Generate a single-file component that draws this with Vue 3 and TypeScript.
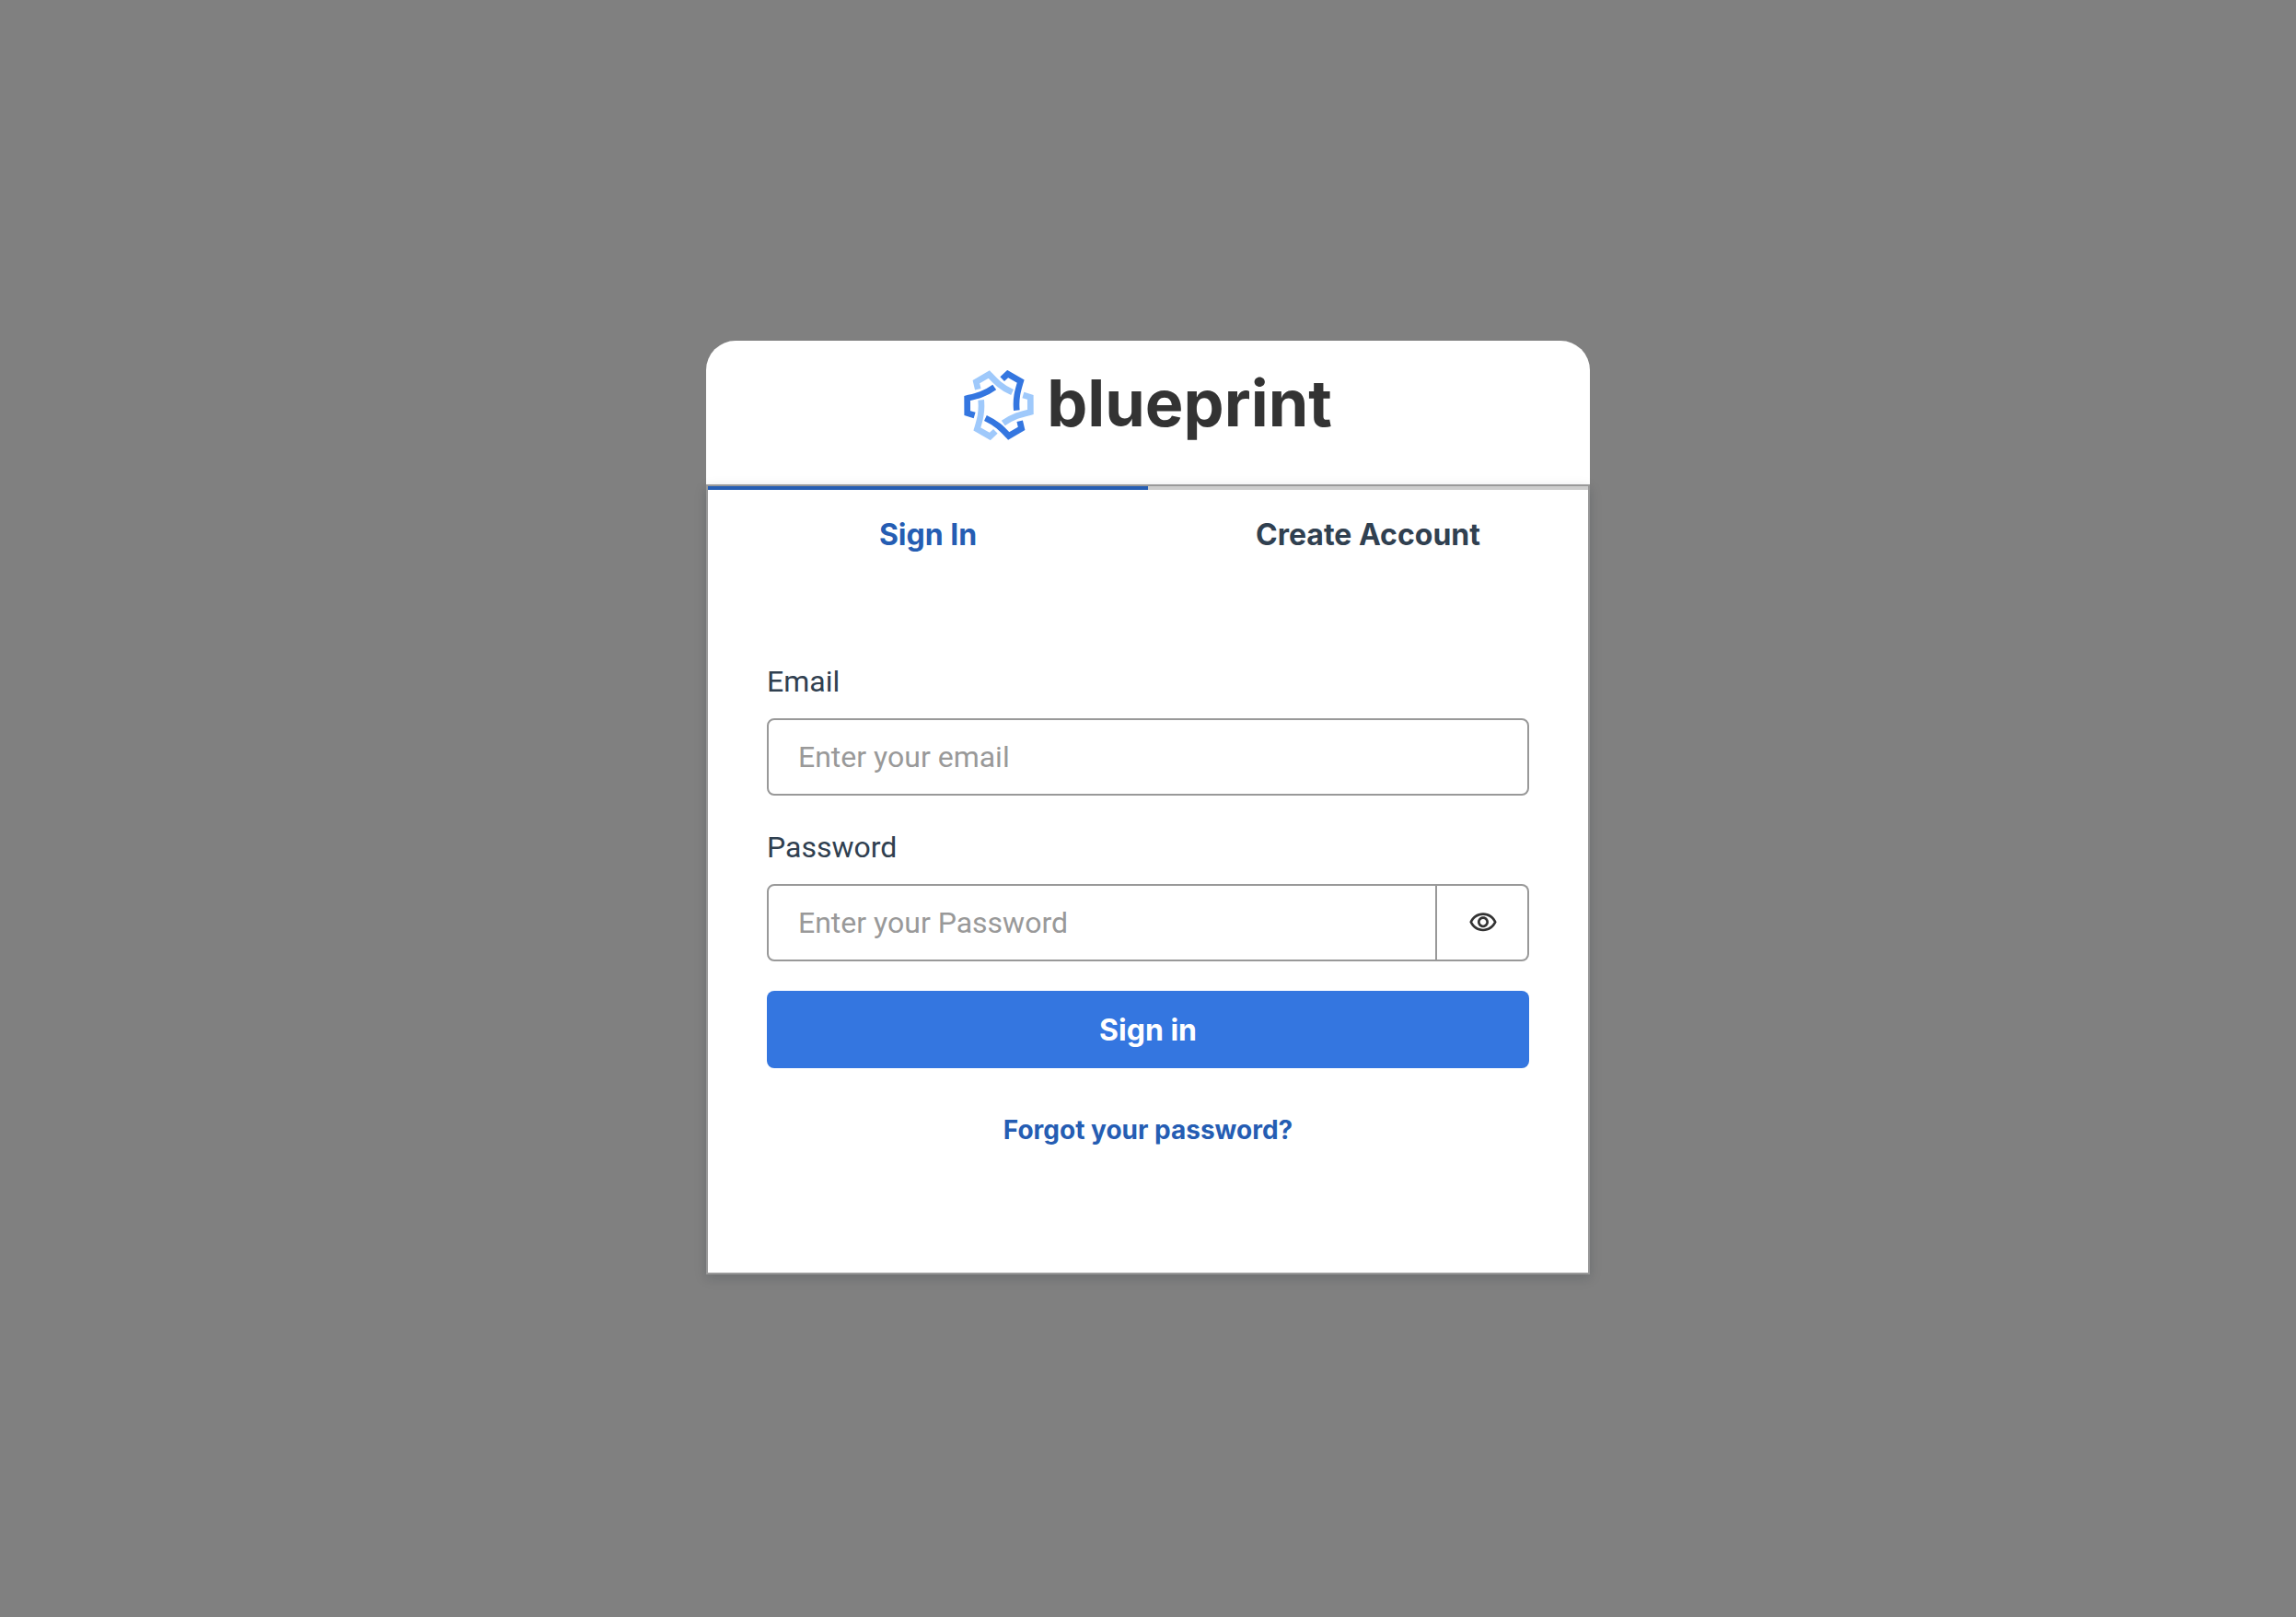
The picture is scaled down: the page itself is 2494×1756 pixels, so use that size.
<script setup lang="ts">
import { ref } from 'vue'

type Tab = 'signIn' | 'createAccount'

const tabs: { id: Tab; label: string }[] = [
  { id: 'signIn', label: 'Sign In' },
  { id: 'createAccount', label: 'Create Account' },
]

const activeTab = ref<Tab>('signIn')
const email = ref('')
const password = ref('')
const showPassword = ref(false)

const lightTurns = [60, 180, 300]
const darkTurns = [0, 120, 240]
const strand = 'M176 80L194 63L236 87C228 114 219 140 223 182'
</script>

<template>
  <main class="page">
    <div class="authenticator">
      <header class="brand">
        <svg class="brand-mark" viewBox="51 51 228 228" aria-hidden="true">
          <g fill="none" stroke-width="20" stroke-linejoin="miter">
            <path v-for="turn in lightTurns" :key="turn" :d="strand" stroke="#9fc9fb" :transform="`rotate(${turn} 165 165)`" />
            <path v-for="turn in darkTurns" :key="turn" :d="strand" stroke="#3476e0" :transform="`rotate(${turn} 165 165)`" />
          </g>
        </svg>
        <span class="brand-name">blueprint</span>
      </header>

      <section class="panel">
        <div class="tabs" role="tablist">
          <button
            v-for="tab in tabs"
            :key="tab.id"
            type="button"
            role="tab"
            class="tab"
            :class="{ active: activeTab === tab.id }"
            :aria-selected="activeTab === tab.id"
            @click="activeTab = tab.id"
          >
            {{ tab.label }}
          </button>
        </div>

        <form class="form" @submit.prevent>
          <div class="field">
            <label for="email">Email</label>
            <input id="email" v-model="email" class="input" type="email" placeholder="Enter your email" />
          </div>

          <div class="field">
            <label for="password">Password</label>
            <div class="input-group">
              <input
                id="password"
                v-model="password"
                class="input"
                :type="showPassword ? 'text' : 'password'"
                placeholder="Enter your Password"
              />
              <button type="button" class="reveal" aria-label="Show password" @click="showPassword = !showPassword">
                <svg viewBox="0 0 24 24" aria-hidden="true">
                  <path
                    fill="currentColor"
                    d="M12 6c3.79 0 7.17 2.13 8.82 5.5C19.17 14.87 15.79 17 12 17s-7.17-2.13-8.82-5.5C4.83 8.13 8.21 6 12 6m0-2C7 4 2.73 7.11 1 11.5 2.73 15.89 7 19 12 19s9.27-3.11 11-7.5C21.27 7.11 17 4 12 4zm0 5c1.38 0 2.5 1.12 2.5 2.5S13.38 14 12 14s-2.5-1.12-2.5-2.5S10.62 9 12 9m0-2c-2.48 0-4.5 2.02-4.5 4.5S9.52 16 12 16s4.5-2.02 4.5-4.5S14.48 7 12 7z"
                  />
                </svg>
              </button>
            </div>
          </div>

          <button type="submit" class="submit">Sign in</button>
          <button type="button" class="forgot">Forgot your password?</button>
        </form>
      </section>
    </div>
  </main>
</template>

<style>
body {
  margin: 0;
  background: #808080;
}
</style>

<style scoped>
* {
  box-sizing: border-box;
}

.page {
  display: flex;
  align-items: center;
  justify-content: center;
  min-height: 100vh;
  padding-bottom: 2px;
  font-family: Inter, "Liberation Sans", sans-serif;
  font-size: 32px;
  line-height: 48px;
  color: #304050;
}

button,
input {
  margin: 0;
  font: inherit;
  color: inherit;
}

button {
  cursor: pointer;
}

.authenticator {
  width: 100%;
  max-width: 960px;
}

.brand {
  display: flex;
  justify-content: center;
  gap: 14px;
  padding: 32px 32px 48px;
  border-radius: 32px 32px 0 0;
  background: #fff;
}

.brand-mark {
  width: 76px;
  height: 76px;
}

.brand-name {
  font-size: 70px;
  font-weight: 700;
  line-height: 72px;
  color: #333;
}

.panel {
  position: relative;
  border: 2px solid #999;
  background: #fff;
  box-shadow: 0 4px 12px rgba(13, 26, 38, 0.17);
}

.tabs {
  display: flex;
}

.tab {
  flex: 1;
  padding: 25px 32px 23px;
  border: 0;
  border-top: 4px solid #ccc;
  background: none;
  font-weight: 700;
  text-align: center;
}

.tab.active {
  border-color: #255db3;
  color: #255db3;
}

.form {
  display: flex;
  flex-direction: column;
  gap: 32px;
  padding: 88px 64px 122px;
}

.field {
  display: flex;
  flex-direction: column;
  gap: 16px;
  font-family: Roboto, Inter, sans-serif;
}

.input {
  width: 100%;
  min-width: 0;
  height: 84px;
  padding: 0 32px;
  border: 2px solid #999;
  border-radius: 8px;
  outline: 0;
  background: #fff;
}

.input::placeholder {
  color: #999;
  opacity: 1;
}

.input-group {
  display: flex;
}

.input-group .input {
  flex: 1;
  border-radius: 8px 0 0 8px;
}

.reveal {
  display: flex;
  align-items: center;
  justify-content: center;
  width: 100px;
  padding: 0 0 0 2px;
  border: 2px solid #999;
  border-left: 0;
  border-radius: 0 8px 8px 0;
  background: #fff;
  color: #333;
}

.reveal svg {
  width: 32px;
  height: 32px;
}

.submit {
  height: 84px;
  padding: 2px 0 0;
  border: 0;
  border-radius: 8px;
  background: #3476e0;
  font-weight: 700;
  color: #fff;
}

.forgot {
  align-self: center;
  padding: 13px 24px 11px;
  border: 0;
  background: none;
  font-size: 28px;
  font-weight: 700;
  line-height: 44px;
  color: #255db3;
}
</style>
